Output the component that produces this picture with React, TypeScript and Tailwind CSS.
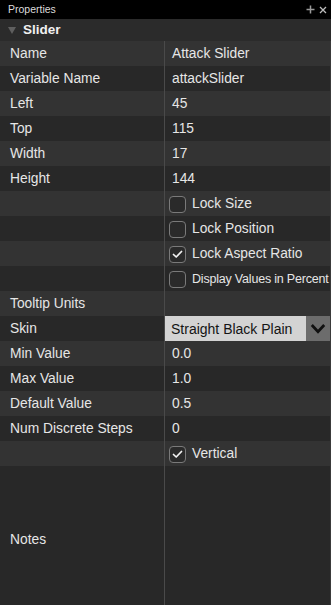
import React from "react";

type Row =
  | { kind: "text"; label: string; value: string }
  | { kind: "check"; label: string; checked: boolean; small?: boolean }
  | { kind: "select"; label: string; value: string };

const ROWS: Row[] = [
  { kind: "text", label: "Name", value: "Attack Slider" },
  { kind: "text", label: "Variable Name", value: "attackSlider" },
  { kind: "text", label: "Left", value: "45" },
  { kind: "text", label: "Top", value: "115" },
  { kind: "text", label: "Width", value: "17" },
  { kind: "text", label: "Height", value: "144" },
  { kind: "check", label: "Lock Size", checked: false },
  { kind: "check", label: "Lock Position", checked: false },
  { kind: "check", label: "Lock Aspect Ratio", checked: true },
  { kind: "check", label: "Display Values in Percent", checked: false, small: true },
  { kind: "text", label: "Tooltip Units", value: "" },
  { kind: "select", label: "Skin", value: "Straight Black Plain" },
  { kind: "text", label: "Min Value", value: "0.0" },
  { kind: "text", label: "Max Value", value: "1.0" },
  { kind: "text", label: "Default Value", value: "0.5" },
  { kind: "text", label: "Num Discrete Steps", value: "0" },
  { kind: "check", label: "Vertical", checked: true },
];

function Checkbox({ checked }: { checked: boolean }) {
  return (
    <span className="flex h-[17px] w-[17px] shrink-0 items-center justify-center rounded-[4px] border border-[#7a7a7a] bg-[#2a2a2a]">
      {checked && (
        <svg width="11" height="9" viewBox="0 0 11 9" fill="none">
          <path d="M1.5 4.5 L4.2 7 L9.5 1.5" stroke="#f2f2f2" strokeWidth="1.7" strokeLinecap="round" strokeLinejoin="round" />
        </svg>
      )}
    </span>
  );
}

function ValueCell({ row }: { row: Row }) {
  if (row.kind === "text") {
    return <div className="flex h-full items-center pl-[7px] pt-px text-[13.8px] text-[#e6e6e6]">{row.value}</div>;
  }
  if (row.kind === "check") {
    return (
      <div className="flex h-full items-center gap-[6px] pl-[4px] pt-px">
        <Checkbox checked={row.checked} />
        <span className={`${row.small ? "text-[12.5px] tracking-[-0.2px]" : "text-[13.8px]"} whitespace-nowrap text-[#e6e6e6]`}>
          {row.label}
        </span>
      </div>
    );
  }
  return (
    <div className="flex h-full">
      <div className="flex flex-1 items-center bg-[#d3d3d3] pl-[6px] pt-px text-[14px] text-[#141414]">{row.value}</div>
      <div className="flex w-[24px] items-center justify-center bg-[#6c6c6c]">
        <svg width="16" height="11" viewBox="0 0 16 11" fill="none">
          <path d="M1.8 2 L8 8.6 L14.2 2" stroke="#101010" strokeWidth="2.8" />
        </svg>
      </div>
    </div>
  );
}

export default function App() {
  return (
    <div className="flex h-[605px] w-[331px] flex-col overflow-hidden bg-[#282828] font-['Liberation_Sans',Arial,sans-serif]">
      <div className="flex h-[19px] shrink-0 items-center justify-between bg-black pl-[8px] pr-[4px]">
        <span className="text-[10.5px] text-[#dcdcdc]">Properties</span>
        <div className="flex items-center gap-[4px]">
          <svg width="9" height="9" viewBox="0 0 9 9">
            <path d="M4.5 0.5 V8.5 M0.5 4.5 H8.5" stroke="#9a9a9a" strokeWidth="1.5" />
          </svg>
          <svg width="8" height="8" viewBox="0 0 8 8">
            <path d="M1 1 L7 7 M7 1 L1 7" stroke="#bdbdbd" strokeWidth="1.3" />
          </svg>
        </div>
      </div>
      <div className="flex h-[22px] shrink-0 items-center bg-[#2b2b2b] pl-[8px]">
        <svg width="8" height="8" viewBox="0 0 8 8">
          <path d="M0 1 H8 L4 8 Z" fill="#5f5f5f" />
        </svg>
        <span className="ml-[7px] text-[13.5px] font-bold text-[#f0f0f0]">Slider</span>
      </div>
      {ROWS.map((row, i) => (
        <div
          key={i}
          className={`flex h-[25px] shrink-0 border-r border-[#3a3a3a] ${i % 2 === 0 ? "bg-[#333333]" : "bg-[#282828]"}`}
        >
          <div className="flex w-[164px] shrink-0 items-center pl-[10px] pt-px text-[13.8px] text-[#e6e6e6]">
            {row.kind === "check" ? "" : row.label}
          </div>
          <div className="w-px shrink-0 bg-[#4a4a4a]" />
          <div className="min-w-0 flex-1">
            <ValueCell row={row} />
          </div>
        </div>
      ))}
      <div className="flex min-h-[148px] flex-1 border-r border-[#3a3a3a] bg-[#282828]">
        <div className="flex w-[164px] shrink-0 items-center pl-[10px] text-[13.8px] text-[#e6e6e6]">Notes</div>
        <div className="w-px shrink-0 bg-[#4a4a4a]" />
        <div className="flex-1" />
      </div>
    </div>
  );
}
